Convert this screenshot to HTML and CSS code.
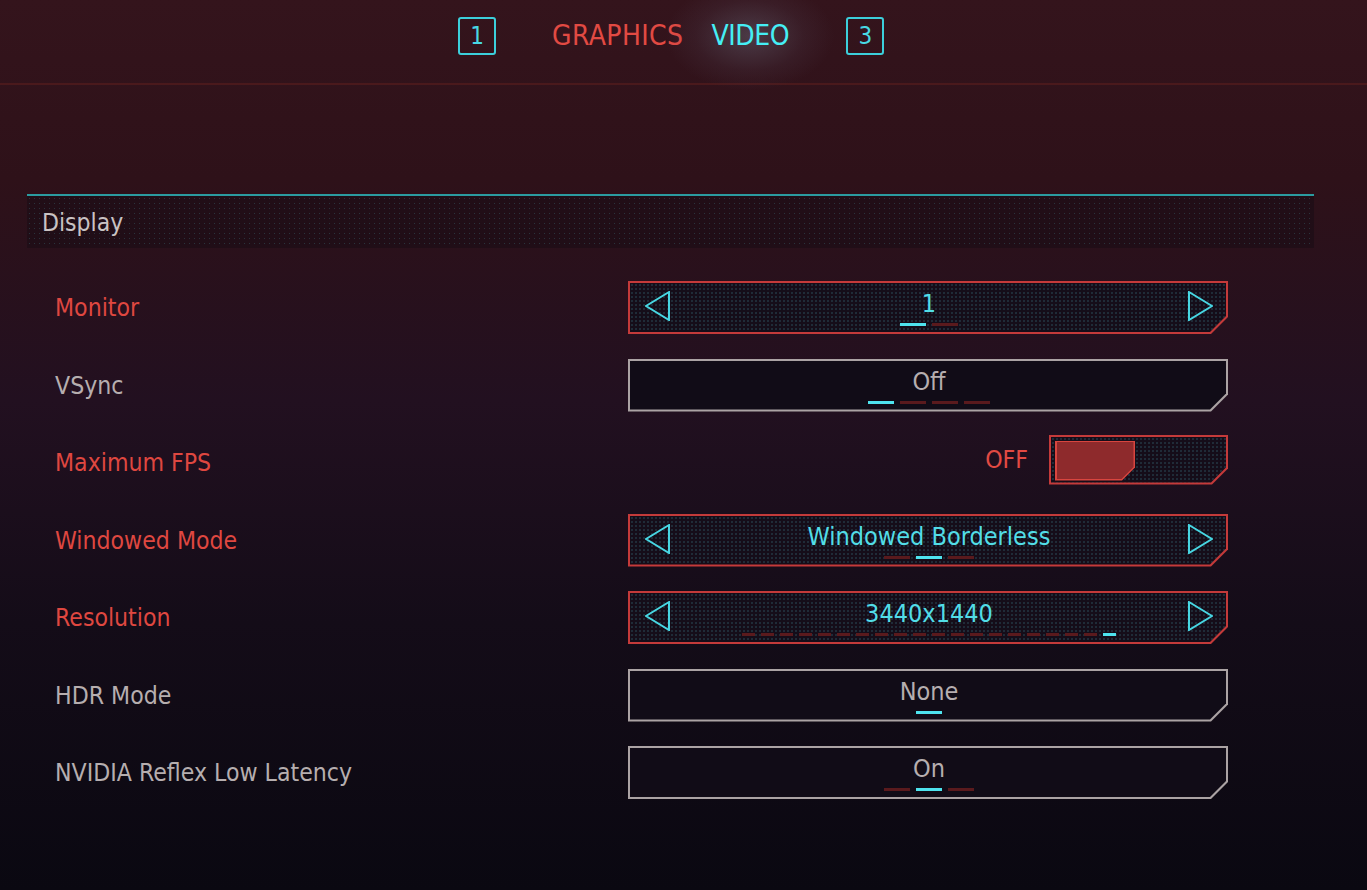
FILE: index.html
```html
<!DOCTYPE html>
<html lang="en">
<head>
    <meta charset="UTF-8">
    <meta name="viewport" content="width=device-width, initial-scale=1.0">
    <title>Settings - Video</title>
    <link rel="stylesheet" href="styles.css">
</head>
<body>
    <div class="screen">
        <div class="tabs">
            <span class="tab-key">1</span>
            <span class="tab tab-graphics">GRAPHICS</span>
            <span class="tab tab-video">VIDEO</span>
            <span class="tab-key key-right">3</span>
        </div>

        <div class="section">
            <div class="section-head">Display</div>

            <div class="rows">
                <div class="row active">
                    <div class="label">Monitor</div>
                    <div class="control">
                        <div class="control-inner">
                            <svg class="arrow" width="26" height="30" viewBox="0 0 26 30"><polygon points="24,1 1,15 24,29" fill="none" stroke="#47d6e2" stroke-width="2"/></svg>
                            <div class="value">
                                <span class="value-text">1</span>
                                <div class="dashes"><i class="on"></i><i></i></div>
                            </div>
                            <svg class="arrow" width="26" height="30" viewBox="0 0 26 30"><polygon points="2,1 25,15 2,29" fill="none" stroke="#47d6e2" stroke-width="2"/></svg>
                        </div>
                    </div>
                </div>

                <div class="row">
                    <div class="label">VSync</div>
                    <div class="control">
                        <div class="control-inner">
                            <div class="value">
                                <span class="value-text">Off</span>
                                <div class="dashes"><i class="on"></i><i></i><i></i><i></i></div>
                            </div>
                        </div>
                    </div>
                </div>

                <div class="row active">
                    <div class="label">Maximum FPS</div>
                    <div class="toggle-wrap">
                        <span class="toggle-state">OFF</span>
                        <div class="toggle">
                            <div class="toggle-inner">
                                <div class="toggle-knob"><div class="knob-fill"></div></div>
                            </div>
                        </div>
                    </div>
                </div>

                <div class="row active">
                    <div class="label">Windowed Mode</div>
                    <div class="control">
                        <div class="control-inner">
                            <svg class="arrow" width="26" height="30" viewBox="0 0 26 30"><polygon points="24,1 1,15 24,29" fill="none" stroke="#47d6e2" stroke-width="2"/></svg>
                            <div class="value">
                                <span class="value-text">Windowed Borderless</span>
                                <div class="dashes"><i></i><i class="on"></i><i></i></div>
                            </div>
                            <svg class="arrow" width="26" height="30" viewBox="0 0 26 30"><polygon points="2,1 25,15 2,29" fill="none" stroke="#47d6e2" stroke-width="2"/></svg>
                        </div>
                    </div>
                </div>

                <div class="row active">
                    <div class="label">Resolution</div>
                    <div class="control">
                        <div class="control-inner">
                            <svg class="arrow" width="26" height="30" viewBox="0 0 26 30"><polygon points="24,1 1,15 24,29" fill="none" stroke="#47d6e2" stroke-width="2"/></svg>
                            <div class="value">
                                <span class="value-text">3440x1440</span>
                                <div class="dashes dashes-tight"><i></i><i></i><i></i><i></i><i></i><i></i><i></i><i></i><i></i><i></i><i></i><i></i><i></i><i></i><i></i><i></i><i></i><i></i><i></i><i class="on"></i></div>
                            </div>
                            <svg class="arrow" width="26" height="30" viewBox="0 0 26 30"><polygon points="2,1 25,15 2,29" fill="none" stroke="#47d6e2" stroke-width="2"/></svg>
                        </div>
                    </div>
                </div>

                <div class="row">
                    <div class="label">HDR Mode</div>
                    <div class="control">
                        <div class="control-inner">
                            <div class="value">
                                <span class="value-text">None</span>
                                <div class="dashes"><i class="on"></i></div>
                            </div>
                        </div>
                    </div>
                </div>

                <div class="row">
                    <div class="label">NVIDIA Reflex Low Latency</div>
                    <div class="control">
                        <div class="control-inner">
                            <div class="value">
                                <span class="value-text">On</span>
                                <div class="dashes"><i></i><i class="on"></i><i></i></div>
                            </div>
                        </div>
                    </div>
                </div>
            </div>
        </div>
    </div>
</body>
</html>
```

FILE: styles.css
```css
body, html {
    margin: 0;
    padding: 0;
    height: 100%;
    font-family: 'DejaVu Sans Condensed', 'DejaVu Sans', 'Liberation Sans', sans-serif;
    font-stretch: condensed;
}
.screen {
    height: 100%;
    overflow: hidden;
    background: linear-gradient(180deg, #34141c 0%, #2e1119 20%, #221020 45%, #140c18 70%, #0a0811 100%);
}

/* top tab bar */
.tabs {
    height: 85px;
    border-bottom: 2px solid #4a191c;
    display: flex;
    align-items: center;
    padding-left: 458px;
    padding-bottom: 12px;
    box-sizing: border-box;
}
.tab-key {
    width: 38px;
    height: 38px;
    box-sizing: border-box;
    border: 2px solid #3ccfdb;
    border-radius: 3px;
    color: #48d8e4;
    font-size: 24px;
    display: flex;
    align-items: center;
    justify-content: center;
}
.tab {
    font-size: 28px;
    position: relative;
}
.tab-graphics {
    color: #e24a43;
    margin-left: 56px;
    letter-spacing: 0.4px;
}
.tab-video {
    color: #45eef5;
    margin-left: 28px;
    letter-spacing: -0.4px;
    z-index: 0;
}
.tab-video::before {
    content: '';
    position: absolute;
    left: 50%;
    top: 50%;
    width: 170px;
    height: 110px;
    transform: translate(-50%, -50%);
    background: radial-gradient(ellipse at center, rgba(120, 130, 150, 0.35) 0%, rgba(90, 80, 100, 0.15) 45%, transparent 70%);
    z-index: -1;
}
.key-right {
    margin-left: 57px;
}

/* display section */
.section {
    margin: 109px 53px 0 27px;
}
.section-head {
    border-top: 2px solid #2b9ba0;
    height: 52px;
    padding-left: 15px;
    display: flex;
    align-items: center;
    color: #c9c2c3;
    font-size: 24.5px;
    background:
        radial-gradient(rgba(70, 150, 160, 0.28) 0.6px, transparent 1px) 0 0 / 5px 5px,
        rgba(20, 10, 20, 0.45);
}
.rows {
    display: flex;
    flex-direction: column;
    gap: 24.5px;
    padding-top: 33px;
}
.row {
    display: flex;
    align-items: center;
    height: 53px;
    padding-left: 28px;
}
.label {
    width: 573px;
    font-size: 24.6px;
    color: #b6aeaf;
}
.row.active .label {
    color: #df4740;
}

/* selector control with cut corner */
.control {
    width: 600px;
    height: 53px;
    padding: 2px;
    box-sizing: border-box;
    background: #aba3a4;
    clip-path: polygon(0 0, 100% 0, 100% calc(100% - 17px), calc(100% - 17px) 100%, 0 100%);
}
.row.active .control {
    background: #c43a3a;
}
.control-inner {
    height: 100%;
    display: flex;
    align-items: center;
    padding: 0 13px 0 15px;
    box-sizing: border-box;
    background: #110c17;
    clip-path: polygon(0 0, 100% 0, 100% calc(100% - 16px), calc(100% - 16px) 100%, 0 100%);
}
.row.active .control-inner {
    background:
        radial-gradient(rgba(70, 150, 160, 0.3) 0.6px, transparent 1px) 0 0 / 4px 4px,
        #150d19;
}
.arrow {
    flex: none;
    margin-top: -3px;
}
.value {
    flex: 1;
    display: flex;
    flex-direction: column;
    align-items: center;
    margin-top: 0;
}
.value-text {
    font-size: 25px;
    color: #b6aeaf;
    line-height: 30px;
}
.row.active .value-text {
    color: #52dde7;
}
.dashes {
    display: flex;
    gap: 6px;
    margin-top: 4px;
}
.dashes i {
    width: 26px;
    height: 3px;
    background: #5a1a1d;
}
.dashes-tight i {
    width: 13px;
}
.dashes i.on {
    background: #4ee3ee;
}

/* toggle */
.toggle-wrap {
    width: 600px;
    display: flex;
    align-items: center;
    justify-content: flex-end;
    gap: 21px;
    margin-bottom: 6px;
}
.toggle-state {
    color: #e24a43;
    font-size: 24.6px;
}
.toggle {
    width: 179px;
    height: 50px;
    padding: 2px;
    box-sizing: border-box;
    background: #c43a3a;
    clip-path: polygon(0 0, 100% 0, 100% calc(100% - 16px), calc(100% - 16px) 100%, 0 100%);
}
.toggle-inner {
    height: 100%;
    box-sizing: border-box;
    padding: 4px;
    background:
        radial-gradient(rgba(70, 150, 160, 0.3) 0.6px, transparent 1px) 0 0 / 4px 4px,
        #150d19;
    clip-path: polygon(0 0, 100% 0, 100% calc(100% - 15px), calc(100% - 15px) 100%, 0 100%);
}
.toggle-knob {
    width: 80px;
    height: 40px;
    padding: 1.5px;
    box-sizing: border-box;
    background: #d8453f;
    clip-path: polygon(0 0, 100% 0, 100% calc(100% - 13px), calc(100% - 13px) 100%, 0 100%);
}
.knob-fill {
    height: 100%;
    background: #8e2a2c;
    clip-path: polygon(0 0, 100% 0, 100% calc(100% - 12px), calc(100% - 12px) 100%, 0 100%);
}
```
